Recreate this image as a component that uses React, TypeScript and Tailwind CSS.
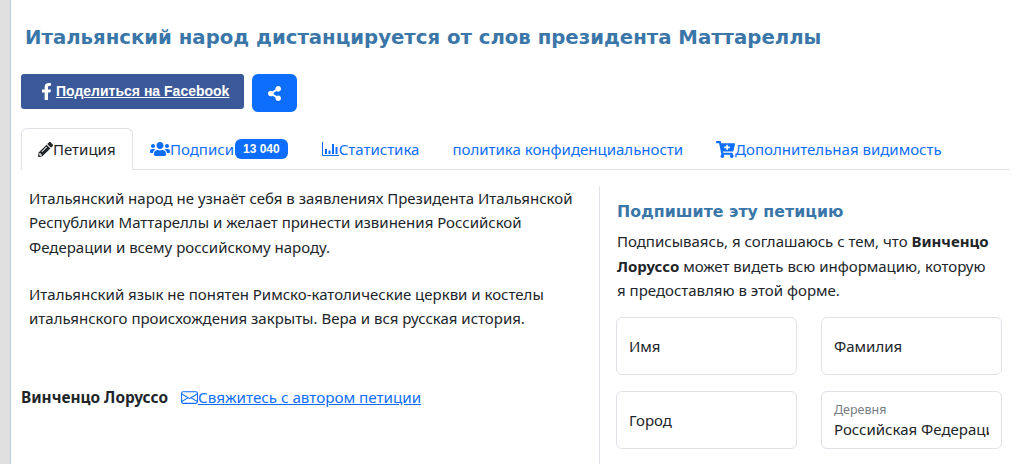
import { FaCartPlus, FaFacebookF, FaPencilAlt, FaShareAlt, FaUsers } from "react-icons/fa"
import { BsEnvelope } from "react-icons/bs"

const body = "font-['Noto_Sans','Open_Sans',sans-serif]"

function Field({ label, value }: { label: string; value?: string }) {
    return (
        <div className="w-[181px] h-[58px] border border-[#dee2e6] rounded-md px-[12px] flex flex-col justify-center overflow-hidden">
            {value ? (
                <>
                    <span className="text-[12.5px] leading-[16px] text-[#777d83] mt-[2px]">{label}</span>
                    <span className="text-[15px] leading-[22px] text-[#212529] whitespace-nowrap overflow-hidden w-[155px]">{value}</span>
                </>
            ) : (
                <span className="text-[15px] leading-[22px] text-[#212529]">{label}</span>
            )}
        </div>
    )
}

function ChartIcon() {
    return (
        <svg width="17" height="14" viewBox="0 0 17 14" fill="none" stroke="currentColor">
            <path d="M0.5 0v13.5H17" />
            <path strokeWidth="2" d="M4 12V7M7.5 12V8.5M11 12V2M14.5 12V5" />
        </svg>
    )
}

export default function App() {
    const tab = "flex items-center h-[41px] pt-[1px] text-[15px] text-[#0d6efd] whitespace-nowrap"

    return (
        <div className={`w-[1017px] h-[464px] overflow-hidden bg-white flex ${body}`}>
            <div className="w-[11px] shrink-0 bg-[#e0e0e0] border-r border-[#b5cde0]" />

            <main className="w-[989px] ml-[10px]">
                <h1 className="ml-[4px] pt-[25px] h-[74px] text-[19.7px] leading-[26px] font-bold text-[#3a76a8] font-['DejaVu_Sans',sans-serif] whitespace-nowrap">
                    Итальянский народ дистанцируется от слов президента Маттареллы
                </h1>

                <div className="flex items-start gap-2">
                    <a className="w-[223px] h-[35px] bg-[#3b5998] rounded-[3px] flex items-center pl-[17px] text-white text-[14px] font-bold underline font-['Liberation_Sans',sans-serif] whitespace-nowrap">
                        <FaFacebookF size={17} className="mr-[1px]" />
                        Поделиться на Facebook
                    </a>
                    <button className="w-[45px] h-[38px] bg-[#0d6efd] rounded-md flex items-center justify-center text-white">
                        <FaShareAlt size={15} />
                    </button>
                </div>

                <nav className="flex mt-[16px] h-[42px] border-b border-[#dee2e6]">
                    <div className="w-[112px] h-[42px] pt-[1px] border border-[#dee2e6] border-b-white rounded-t-md bg-white flex items-center pl-[16px] text-[15px] text-[#212529]">
                        <FaPencilAlt size={15} />
                        Петиция
                    </div>
                    <div className={`${tab} ml-[17px]`}>
                        <FaUsers size={20} />
                        Подписи
                        <span className="ml-[1px] bg-[#0d6efd] text-white text-[12px] font-bold rounded-md px-[8px] h-[20px] flex items-center font-['Liberation_Sans',sans-serif]">13 040</span>
                    </div>
                    <div className={`${tab} ml-[34px]`}>
                        <ChartIcon />
                        Статистика
                    </div>
                    <div className={`${tab} ml-[33px]`}>политика конфиденциальности</div>
                    <div className={`${tab} ml-[33px]`}>
                        <FaCartPlus size={19} />
                        Дополнительная видимость
                    </div>
                </nav>

                <div className="flex mt-[16px]">
                    <section className="w-[579px] border-r border-[#dee2e6] h-[280px]">
                        <div className="pl-[8px] -mt-[0.5px] text-[15px] leading-[24.5px] text-[#212529]">
                            <p>
                                Итальянский народ не узнаёт себя в заявлениях Президента Итальянской<br />
                                Республики Маттареллы и желает принести извинения Российской<br />
                                Федерации и всему российскому народу.
                            </p>
                            <p className="mt-[22.5px]">
                                Итальянский язык не понятен Римско-католические церкви и костелы<br />
                                итальянского происхождения закрыты. Вера и вся русская история.
                            </p>
                        </div>
                        <div className="flex items-center mt-[54.5px] text-[15.2px] leading-[25px]">
                            <strong className="font-bold text-[15.4px] text-[#212529]">Винченцо Лоруссо</strong>
                            <a className="flex items-center ml-[13px] text-[#0d6efd]">
                                <BsEnvelope size={17} />
                                <span className="underline">Свяжитесь с автором петиции</span>
                            </a>
                        </div>
                    </section>

                    <aside className="pl-[17px]">
                        <h2 className="mt-[15px] text-[15.8px] leading-[22px] font-bold text-[#3a76a8] font-['DejaVu_Sans',sans-serif]">Подпишите эту петицию</h2>
                        <p className="mt-[6px] w-[380px] text-[15px] leading-[24.5px] text-[#212529]">
                            Подписываясь, я соглашаюсь с тем, что <strong className="font-bold">Винченцо Лоруссо</strong> может видеть всю информацию, которую я предоставляю в этой форме.
                        </p>
                        <div className="grid grid-cols-[181px_181px] gap-x-[24px] gap-y-[16px] mt-[14px] -ml-[1px]">
                            <Field label="Имя" />
                            <Field label="Фамилия" />
                            <Field label="Город" />
                            <Field label="Деревня" value="Российская Федерация" />
                        </div>
                    </aside>
                </div>
            </main>
        </div>
    )
}
